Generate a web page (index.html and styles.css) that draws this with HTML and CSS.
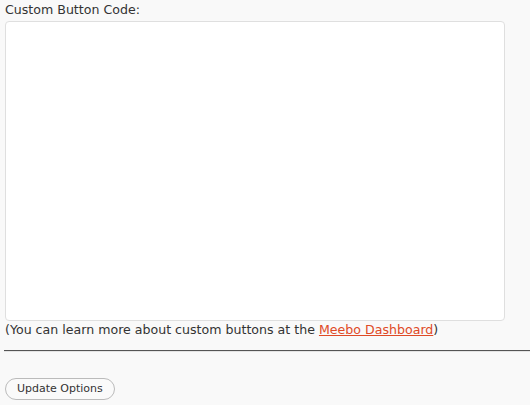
FILE: index.html
```html
<!DOCTYPE html>
<html>
<head>
<meta charset="utf-8">
<link rel="stylesheet" href="styles.css">
</head>
<body>
<div class="wrap">
  <label class="label" for="code">Custom Button Code:</label>
  <textarea id="code" class="code"></textarea>
  <p class="note">(You can learn more about custom buttons at the <a href="#" class="link">Meebo Dashboard</a>)</p>
  <hr class="rule">
  <div class="submit">
    <button class="btn" type="button">Update Options</button>
  </div>
</div>
</body>
</html>
```
FILE: styles.css
```css
html, body {
  margin: 0;
  padding: 0;
  background: #f9f9f9;
}
body {
  font-family: "DejaVu Sans", Verdana, sans-serif;
  font-size: 12.6px;
  color: #333;
  overflow: hidden;
}
.wrap {
  padding: 2px 0 0 5px;
}
.label {
  display: block;
  line-height: 16px;
  height: 19px;
}
.code {
  display: block;
  box-sizing: border-box;
  width: 500px;
  height: 300px;
  margin: 0;
  border: 1px solid #dfdfdf;
  border-radius: 4px;
  background: #fff;
  resize: none;
  padding: 2px;
}
.note {
  margin: 0;
  line-height: 18px;
  padding-top: 0;
}
.link {
  color: #df4a26;
}
.rule {
  margin: 11px 0 0 -1px;
  border: 0;
  border-top: 1px solid #555;
  height: 1px;
  background: #e4e4e4;
  width: 540px;
}
.submit {
  padding-top: 26px;
}
.btn {
  font-family: "DejaVu Sans", Verdana, sans-serif;
  font-size: 11px;
  color: #333;
  background: #fafafa;
  border: 1px solid #bbb;
  border-radius: 11px;
  height: 22px;
  padding: 0 11px;
  line-height: 20px;
}
```
